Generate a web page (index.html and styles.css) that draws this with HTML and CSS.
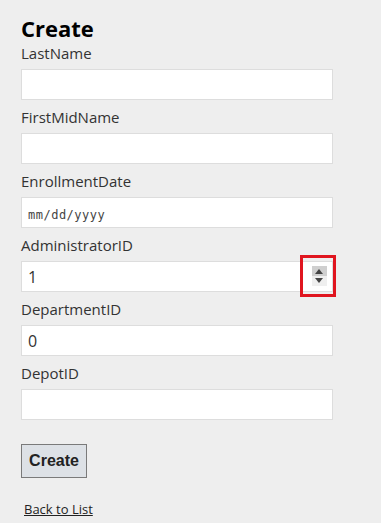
FILE: index.html
```html
<!DOCTYPE html>
<html lang="en">
<head>
  <meta charset="UTF-8">
  <title>Create</title>
  <link rel="stylesheet" href="styles.css">
</head>
<body>
  <div class="page">
    <h2>Create</h2>

    <form class="form">
      <div class="field">
        <label>LastName</label>
        <input type="text" class="box">
      </div>
      <div class="field">
        <label>FirstMidName</label>
        <input type="text" class="box">
      </div>
      <div class="field">
        <label>EnrollmentDate</label>
        <input type="text" class="box date" placeholder="mm/dd/yyyy">
      </div>
      <div class="field">
        <label>AdministratorID</label>
        <div class="num-wrap">
          <input type="text" class="box" value="1">
          <span class="spinner">
            <span class="up"></span>
            <span class="down"></span>
          </span>
          <span class="mark"></span>
        </div>
      </div>
      <div class="field">
        <label>DepartmentID</label>
        <input type="text" class="box" value="0">
      </div>
      <div class="field">
        <label>DepotID</label>
        <input type="text" class="box">
      </div>

      <button type="button" class="submit">Create</button>
    </form>

    <a href="#" class="back">Back to List</a>
  </div>
</body>
</html>
```

FILE: styles.css
```css
body {
  margin: 0;
  background: #eeeeee;
  color: #333;
  font-family: "Open Sans", "Noto Sans", Arial, sans-serif;
}
.page {
  padding: 14px 0 0 21px;
  width: 312px;
}
h2 {
  margin: 0;
  font-size: 22px;
  line-height: 28px;
  font-weight: bold;
  color: #000;
}
.field {
  display: flex;
  flex-direction: column;
  margin-bottom: 6px;
}
label {
  font-size: 15px;
  line-height: 22px;
  height: 22px;
  margin-bottom: 5px;
  color: #333;
}
.box {
  box-sizing: border-box;
  width: 312px;
  height: 31px;
  margin: 0;
  padding: 0 6px;
  border: 1px solid #dddddd;
  background: #fff;
  font-family: "Open Sans", "Noto Sans", Arial, sans-serif;
  font-size: 16px;
  color: #333;
  outline: none;
}
.date::placeholder {
  font-family: "DejaVu Sans Mono", "Liberation Mono", monospace;
  font-size: 12px;
  color: #444;
  letter-spacing: 0.5px;
}
.num-wrap {
  position: relative;
  width: 312px;
  height: 31px;
}
.spinner {
  position: absolute;
  top: 5px;
  left: 291px;
  width: 15px;
  height: 20px;
  display: flex;
  flex-direction: column;
}
.spinner .up,
.spinner .down {
  flex: 1;
  position: relative;
}
.spinner .up {
  background: #cfcfcf;
}
.spinner .down {
  background: #efefef;
}
.spinner .up::after,
.spinner .down::after {
  content: "";
  position: absolute;
  left: 3px;
  border-left: 4.5px solid transparent;
  border-right: 4.5px solid transparent;
}
.spinner .up::after {
  top: 3px;
  border-bottom: 5px solid #444;
}
.spinner .down::after {
  top: 2px;
  border-top: 5px solid #444;
}
.mark {
  position: absolute;
  top: -6px;
  left: 279px;
  width: 30px;
  height: 36px;
  border: 3px solid #e0151f;
}
.submit {
  margin-top: 18px;
  width: 66px;
  height: 34px;
  padding: 0;
  background: #dde1e6;
  border: 1px solid #7a7a7a;
  font-family: "Liberation Sans", Arial, sans-serif;
  font-size: 16px;
  font-weight: bold;
  color: #222;
}
.back {
  display: inline-block;
  margin: 22px 0 0 3px;
  font-size: 13px;
  color: #222;
  text-decoration: underline;
}
```
